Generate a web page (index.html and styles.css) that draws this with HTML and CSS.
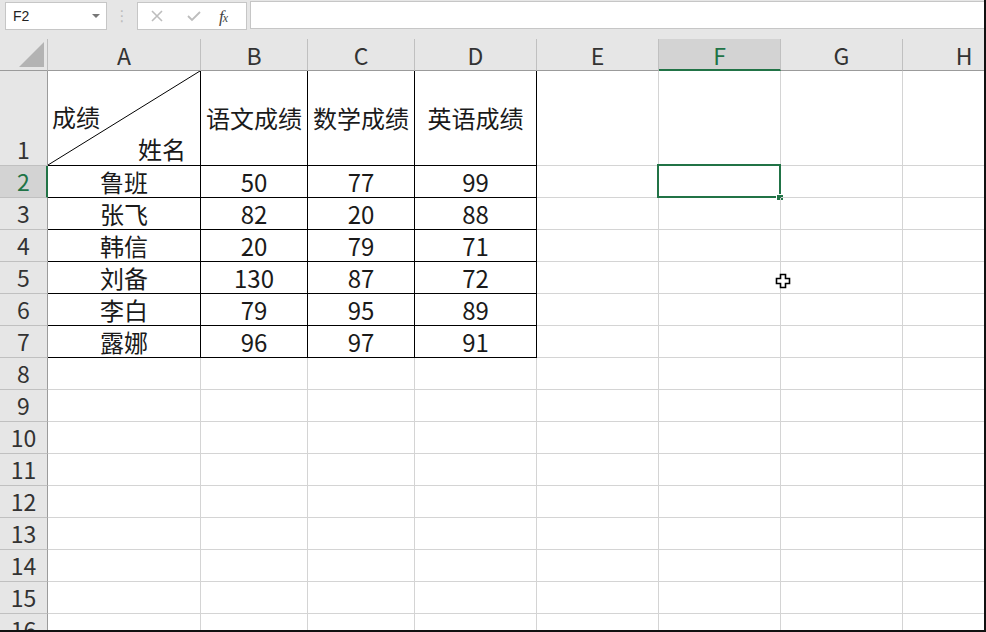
FILE: index.html
```html
<!DOCTYPE html>
<html lang="zh-CN">
<head>
<meta charset="utf-8">
<title>Excel</title>
<link rel="stylesheet" href="styles.css">
</head>
<body>
<div class="page">
  <div class="topbar">
    <div class="namebox"><span class="nb-text">F2</span><span class="nb-arrow"></span></div>
    <div class="dots">⋮</div>
    <div class="fxbox">
      <svg class="ico" width="14" height="14" viewBox="0 0 14 14"><path d="M2 2 L12 12 M12 2 L2 12" stroke="#bdbdbd" stroke-width="1.6" fill="none"/></svg>
      <svg class="ico" width="16" height="14" viewBox="0 0 16 14"><path d="M2 7 L6 11 L14 3" stroke="#bdbdbd" stroke-width="1.8" fill="none"/></svg>
      <span class="fx">f<i>x</i></span>
    </div>
    <div class="finput"></div>
  </div>

  <div class="sheet">
    <div class="corner"><div class="tri"></div></div>
    <div class="ch">A</div>
    <div class="ch">B</div>
    <div class="ch">C</div>
    <div class="ch">D</div>
    <div class="ch">E</div>
    <div class="ch sel">F</div>
    <div class="ch">G</div>
    <div class="ch last">H</div>

    <div class="rh bottom">1</div>
    <div class="c t diag">
      <svg class="diagline" viewBox="0 0 100 100" preserveAspectRatio="none"><line x1="100" y1="0" x2="0" y2="100" stroke="#000" stroke-width="1" vector-effect="non-scaling-stroke"/></svg>
      <div class="dl1">成绩</div>
      <div class="dl2">姓名</div>
    </div>
    <div class="c t">语文成绩</div>
    <div class="c t">数学成绩</div>
    <div class="c t">英语成绩</div>
    <div class="c"></div><div class="c"></div><div class="c"></div><div class="c"></div>

    <div class="rh sel">2</div>
    <div class="c t">鲁班</div><div class="c t">50</div><div class="c t">77</div><div class="c t">99</div>
    <div class="c"></div><div class="c fsel"><div class="selbox"><div class="handle"></div></div></div><div class="c"></div><div class="c"></div>

    <div class="rh">3</div>
    <div class="c t">张飞</div><div class="c t">82</div><div class="c t">20</div><div class="c t">88</div>
    <div class="c"></div><div class="c"></div><div class="c"></div><div class="c"></div>

    <div class="rh">4</div>
    <div class="c t">韩信</div><div class="c t">20</div><div class="c t">79</div><div class="c t">71</div>
    <div class="c"></div><div class="c"></div><div class="c"></div><div class="c"></div>

    <div class="rh">5</div>
    <div class="c t">刘备</div><div class="c t">130</div><div class="c t">87</div><div class="c t">72</div>
    <div class="c"></div><div class="c"></div><div class="c"></div><div class="c"></div>

    <div class="rh">6</div>
    <div class="c t">李白</div><div class="c t">79</div><div class="c t">95</div><div class="c t">89</div>
    <div class="c"></div><div class="c"></div><div class="c"></div><div class="c"></div>

    <div class="rh">7</div>
    <div class="c t">露娜</div><div class="c t">96</div><div class="c t">97</div><div class="c t">91</div>
    <div class="c"></div><div class="c"></div><div class="c"></div><div class="c"></div>

    <div class="rh">8</div>
    <div class="c"></div><div class="c"></div><div class="c"></div><div class="c"></div><div class="c"></div><div class="c"></div><div class="c"></div><div class="c"></div>
    <div class="rh">9</div>
    <div class="c"></div><div class="c"></div><div class="c"></div><div class="c"></div><div class="c"></div><div class="c"></div><div class="c"></div><div class="c"></div>
    <div class="rh">10</div>
    <div class="c"></div><div class="c"></div><div class="c"></div><div class="c"></div><div class="c"></div><div class="c"></div><div class="c"></div><div class="c"></div>
    <div class="rh">11</div>
    <div class="c"></div><div class="c"></div><div class="c"></div><div class="c"></div><div class="c"></div><div class="c"></div><div class="c"></div><div class="c"></div>
    <div class="rh">12</div>
    <div class="c"></div><div class="c"></div><div class="c"></div><div class="c"></div><div class="c"></div><div class="c"></div><div class="c"></div><div class="c"></div>
    <div class="rh">13</div>
    <div class="c"></div><div class="c"></div><div class="c"></div><div class="c"></div><div class="c"></div><div class="c"></div><div class="c"></div><div class="c"></div>
    <div class="rh">14</div>
    <div class="c"></div><div class="c"></div><div class="c"></div><div class="c"></div><div class="c"></div><div class="c"></div><div class="c"></div><div class="c"></div>
    <div class="rh">15</div>
    <div class="c"></div><div class="c"></div><div class="c"></div><div class="c"></div><div class="c"></div><div class="c"></div><div class="c"></div><div class="c"></div>
    <div class="rh">16</div>
    <div class="c"></div><div class="c"></div><div class="c"></div><div class="c"></div><div class="c"></div><div class="c"></div><div class="c"></div><div class="c"></div>
  </div>

  <svg class="cursor" width="16" height="16" viewBox="0 0 16 16"><path d="M5.5 1.5 H10.5 V5.5 H14.5 V10.5 H10.5 V14.5 H5.5 V10.5 H1.5 V5.5 H5.5 Z" fill="#fff" stroke="#000" stroke-width="1.6"/></svg>
</div>
</body>
</html>
```
FILE: styles.css
```css
* { box-sizing: border-box; }
html, body { margin: 0; padding: 0; }
body {
  font-family: "Noto Sans CJK SC", "Noto Sans", sans-serif;
  background: #fff;
}
.page {
  width: 986px;
  height: 632px;
  overflow: hidden;
  position: relative;
  background: #e6e6e6;
  border-right: 2px solid #111;
  border-bottom: 2px solid #111;
}
.topbar {
  height: 39px;
  display: flex;
  align-items: flex-start;
  padding: 1px 0 0 5px;
}
.namebox {
  width: 102px;
  height: 28px;
  background: #fff;
  border: 1px solid #c6c6c6;
  display: flex;
  align-items: center;
  justify-content: space-between;
  padding: 0 6px 0 7px;
  margin-top: 1px;
}
.nb-text {
  font-family: "Liberation Sans", sans-serif;
  font-size: 14px;
  color: #222;
}
.nb-arrow {
  width: 0; height: 0;
  border-left: 4px solid transparent;
  border-right: 4px solid transparent;
  border-top: 4px solid #777;
}
.dots {
  width: 30px;
  height: 28px;
  margin-top: 1px;
  display: flex;
  align-items: center;
  justify-content: center;
  color: #bdbdbd;
  font-size: 15px;
  font-family: "DejaVu Sans", sans-serif;
}
.fxbox {
  width: 110px;
  height: 28px;
  margin-top: 1px;
  background: #fff;
  border: 1px solid #c6c6c6;
  display: flex;
  align-items: center;
  padding-left: 12px;
}
.fxbox .ico:first-child { margin-right: 22px; }
.fxbox .ico:nth-child(2) { margin-right: 17px; }
.fx {
  font-family: "Liberation Serif", serif;
  font-style: italic;
  font-size: 17px;
  color: #444;
  letter-spacing: -1px;
  line-height: 1;
}
.fx i { font-size: 12px; }
.finput {
  flex: 1;
  height: 28px;
  margin-left: 3px;
  background: #fff;
  border: 1px solid #c6c6c6;
  border-right: none;
}

.sheet {
  display: grid;
  grid-template-columns: 48px 153px 107px 107px 122px 122px 122px 122px 122px;
  grid-template-rows: 32px 95px repeat(15, 32px);
  background: #fff;
}
.corner {
  background: #e6e6e6;
  border-right: 1px solid #bdbdbd;
  border-bottom: 1px solid #9b9b9b;
  position: relative;
}
.tri {
  position: absolute;
  right: 3px;
  bottom: 3px;
  width: 0; height: 0;
  border-left: 25px solid transparent;
  border-bottom: 25px solid #b3b3b3;
}
.ch {
  background: #e6e6e6;
  border-right: 1px solid #c0c0c0;
  border-bottom: 1px solid #9b9b9b;
  display: flex;
  align-items: center;
  justify-content: center;
  font-size: 23px;
  color: #333;
  line-height: 1;
  padding-top: 1px;
}
.ch.last { border-right: none; }
.ch.sel {
  background: #d3d3d3;
  color: #217346;
  border-bottom: 2px solid #217346;
  padding-top: 2px;
}
.rh {
  background: #e6e6e6;
  border-right: 1px solid #9b9b9b;
  border-bottom: 1px solid #c0c0c0;
  display: flex;
  align-items: center;
  justify-content: center;
  font-size: 23px;
  color: #333;
  line-height: 1;
}
.rh.bottom { align-items: flex-end; padding-bottom: 4px; }
.rh.sel {
  background: #d3d3d3;
  color: #217346;
  border-right: 2px solid #217346;
  padding-left: 1px;
}
.c {
  border-right: 1px solid #d4d4d4;
  border-bottom: 1px solid #d4d4d4;
  position: relative;
}
.c.t {
  border-right-color: #000;
  border-bottom-color: #000;
  display: flex;
  align-items: center;
  justify-content: center;
  font-size: 24px;
  line-height: 32px;
  color: #1a1a1a;
  white-space: nowrap;
}
.c.diag {
  flex-direction: column;
  align-items: stretch;
  justify-content: flex-end;
}
.diagline {
  position: absolute;
  left: 0; top: 0;
  width: 100%; height: 100%;
}
.dl1 { text-align: left; padding-left: 4px; line-height: 32px; }
.dl2 { text-align: right; padding-right: 14px; line-height: 32px; }
.selbox {
  position: absolute;
  left: -2px; top: -2px; right: -1px; bottom: -1px;
  border: 2px solid #217346;
}
.handle {
  position: absolute;
  right: -5px; bottom: -5px;
  width: 8px; height: 7px;
  background: #217346;
  border: 1px solid #fff;
}
.cursor {
  position: absolute;
  left: 775px;
  top: 273px;
}
```
